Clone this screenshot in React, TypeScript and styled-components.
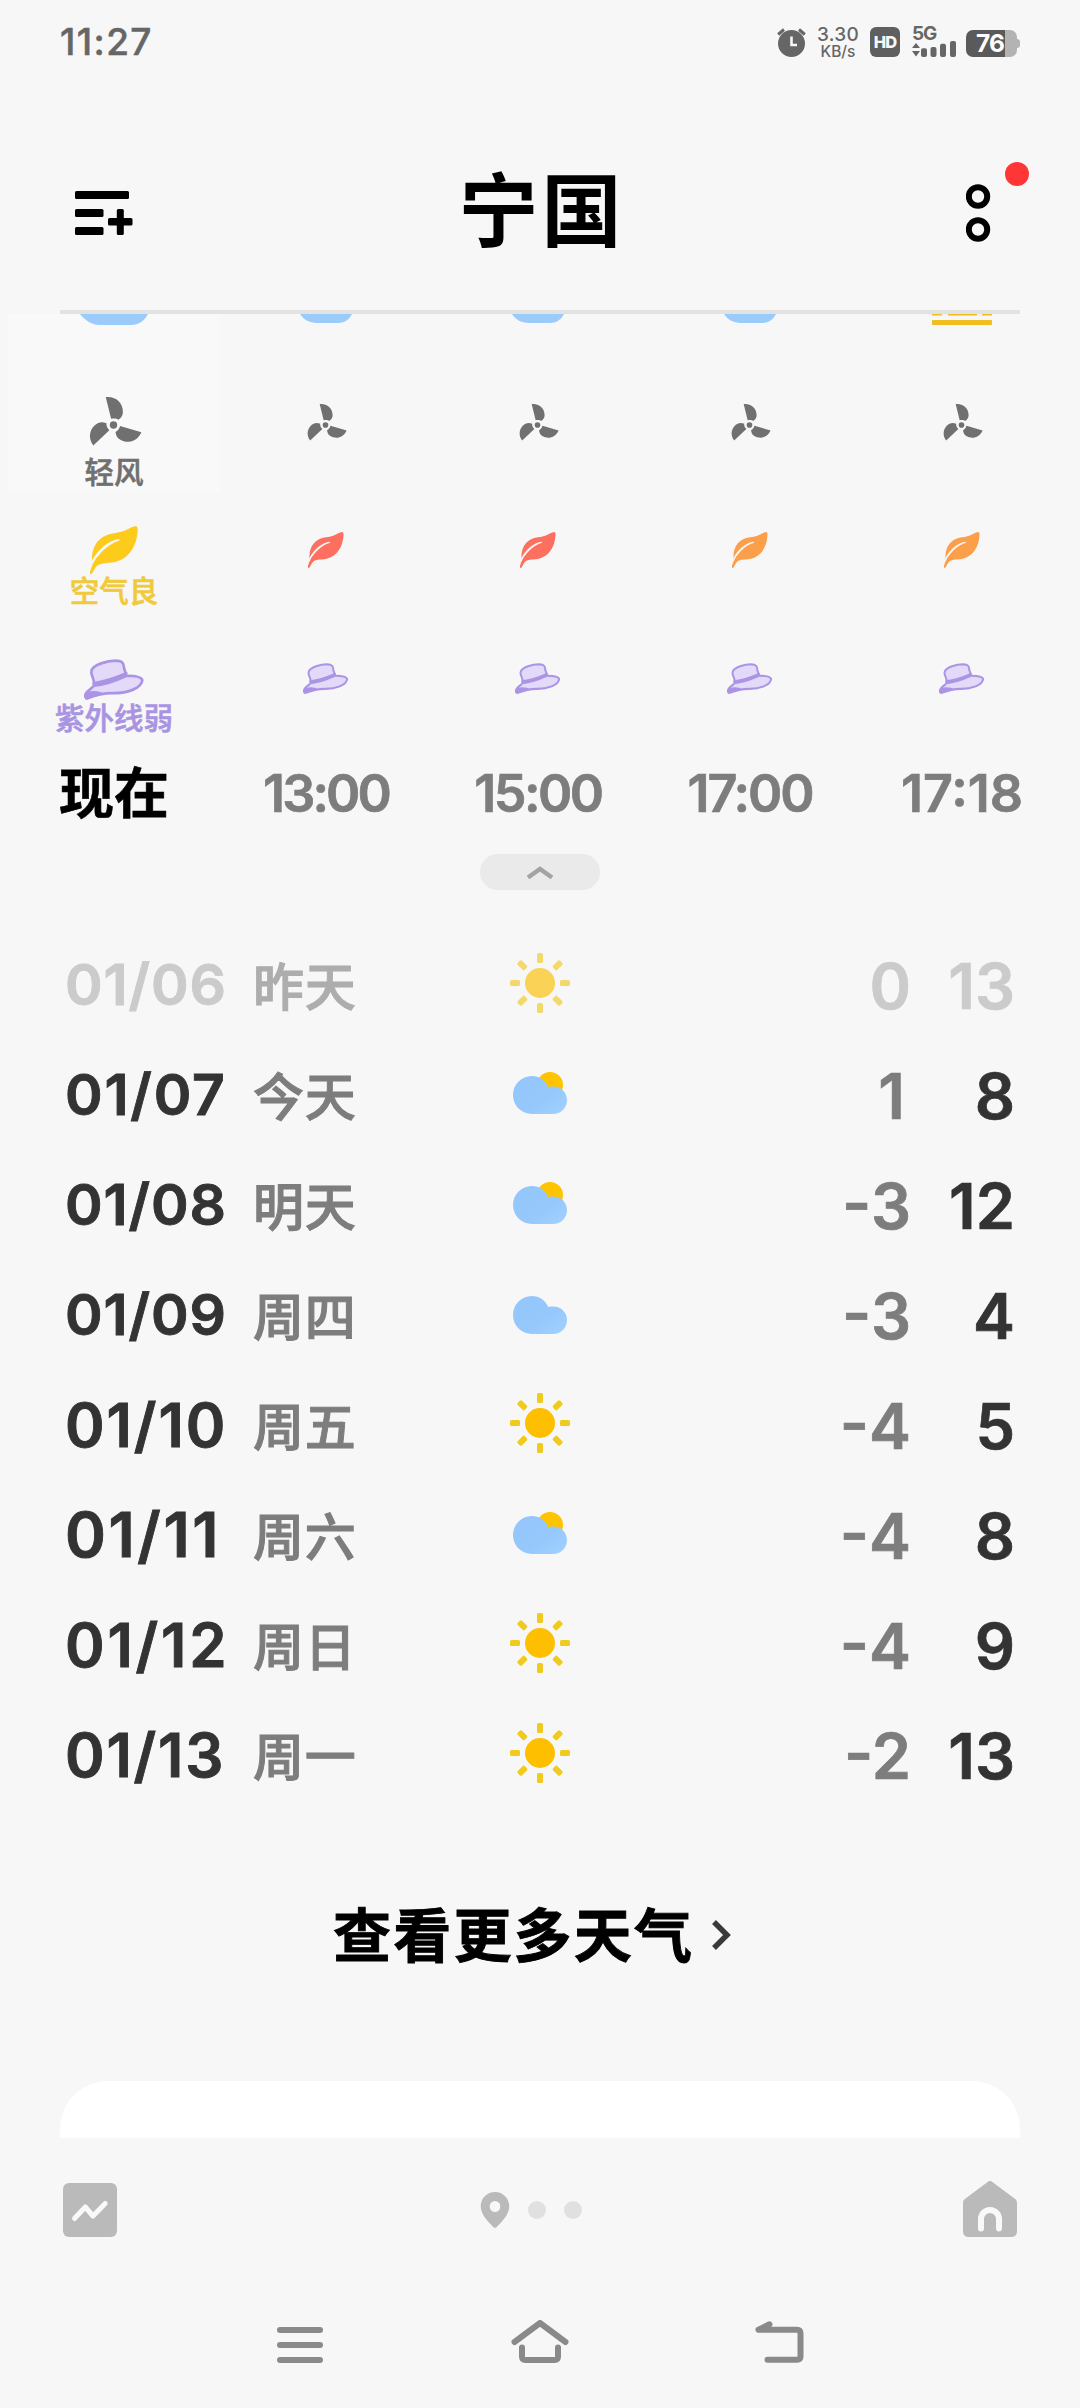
import React from "react";
import styled, { createGlobalStyle } from "styled-components";

const LATIN = `Inter, Roboto, "Noto Sans CJK SC", sans-serif`;
const HAN = `"Noto Sans CJK SC", Inter, sans-serif`;

const GlobalStyle = createGlobalStyle`
  * { box-sizing: border-box; }
  body { margin: 0; background: #f7f7f7; }
  svg { display: block; flex: none; }
`;

const Screen = styled.main`
  width: 1080px;
  height: 2408px;
  display: flex;
  flex-direction: column;
  overflow: hidden;
  background: #f7f7f7;
  font-family: ${LATIN};
`;

/* ---------- status bar ---------- */

const StatusBar = styled.header`
  height: 84px;
  padding: 0 60px;
  display: flex;
  justify-content: space-between;
  align-items: center;
  color: #666;
`;

const Clock = styled.time`
  font-size: 37px;
  line-height: 40px;
  font-weight: 500;
  letter-spacing: 1.4px;
  -webkit-text-stroke: 0.5px currentColor;
`;

const StatusIcons = styled.div`
  display: flex;
  align-items: center;
`;

const NetSpeed = styled.div`
  width: 40px;
  margin: 1px 0 0 12px;
  display: flex;
  flex-direction: column;
  align-items: center;
  white-space: nowrap;
`;

const SpeedValue = styled.span`
  font-size: 19px;
  line-height: 17px;
  font-weight: 500;
  letter-spacing: 0.3px;
`;

const SpeedUnit = styled.span`
  font-size: 15.5px;
  line-height: 17px;
  font-weight: 500;
`;

const HdBadge = styled.div`
  width: 30px;
  height: 30px;
  margin-left: 12px;
  border-radius: 6px;
  display: flex;
  align-items: center;
  justify-content: center;
  background: #5f5f5f;
  color: #f7f7f7;
  font-size: 16.5px;
  font-weight: 800;
  letter-spacing: -0.8px;
`;

const Signal = styled.div`
  width: 44px;
  height: 30px;
  margin-left: 12px;
  display: flex;
  flex-direction: column;
`;

const SignalLabel = styled.span`
  font-size: 19px;
  line-height: 14px;
  height: 14px;
  font-weight: 700;
  letter-spacing: -1.2px;
`;

const Battery = styled.div`
  width: 54px;
  height: 27px;
  margin: 3px 0 0 10px;
  display: flex;
  align-items: center;
`;

const BatteryBody = styled.div`
  width: 51px;
  height: 27px;
  border-radius: 7px;
  display: flex;
  align-items: center;
  padding-left: 10px;
  background: linear-gradient(90deg, #5a5a5a 39px, #b3b3b3 39px);
  color: #fff;
  font-size: 24.5px;
  line-height: 27px;
  font-weight: 700;
  letter-spacing: -0.8px;
`;

const BatteryTip = styled.div`
  width: 3px;
  height: 9px;
  border-radius: 0 3px 3px 0;
  background: #b3b3b3;
`;

/* ---------- title bar ---------- */

const TitleBar = styled.div`
  height: 226px;
  padding: 84px 48px 0 75px;
  display: grid;
  grid-template-columns: 60px 1fr 70px;
  column-gap: 12px;
  align-items: start;
`;

const City = styled.h1`
  margin: -5px 0 0 -14px;
  font-family: ${HAN};
  font-size: 80px;
  line-height: 84px;
  font-weight: 700;
  letter-spacing: 3px;
  text-align: center;
  color: #000;
`;

const AddCityIcon = styled.svg`
  margin-top: 21px;
`;

const MenuButton = styled.div`
  width: 70px;
  height: 90px;
  margin-left: 4px;
  margin-top: -7px;
`;

const Divider = styled.div`
  height: 4px;
  margin: 0 60px;
  flex: none;
  background: #e2e2e2;
`;

/* ---------- hourly ---------- */

const Hourly = styled.section`
  display: grid;
  grid-template-columns: repeat(5, 212px);
  margin-left: 8px;
  height: 509px;
  flex: none;
`;

const Hour = styled.div<{ $current?: boolean }>`
  display: flex;
  flex-direction: column;
  align-items: center;
  background: ${(p) => (p.$current ? "linear-gradient(#f9f9f9 179px, transparent 179px)" : "none")};
`;

const Slot = styled.div<{ $h: number; $gap?: number }>`
  height: ${(p) => p.$h}px;
  margin-top: ${(p) => p.$gap ?? 0}px;
  flex: none;
  display: flex;
  align-items: center;
  justify-content: center;
`;

const SkySlot = styled.div`
  height: 81px;
  flex: none;
`;

const Caption = styled(Slot)<{ $color: string }>`
  padding-bottom: 5px;
  font-family: ${HAN};
  font-size: 29.5px;
  font-weight: 500;
  white-space: nowrap;
  -webkit-text-stroke: 0.6px currentColor;
  color: ${(p) => p.$color};
`;

const HourTime = styled(Slot)<{ $track: number }>`
  font-size: 52px;
  font-weight: 600;
  letter-spacing: ${(p) => p.$track}px;
  -webkit-text-stroke: 0.7px currentColor;
  color: #7d7d7d;
`;

const NowLabel = styled(Slot)`
  padding-bottom: 8px;
  font-family: ${HAN};
  font-size: 55px;
  font-weight: 700;
  -webkit-text-stroke: 0.6px currentColor;
  color: #000;
`;

const CollapsePill = styled.button`
  width: 120px;
  height: 36px;
  margin: 31px auto 0;
  padding: 0;
  border: 0;
  border-radius: 18px;
  flex: none;
  display: flex;
  align-items: center;
  justify-content: center;
  background: #eaeaea;
`;

/* ---------- daily ---------- */

const Daily = styled.section`
  margin-top: 41px;
  flex: none;
`;

const DayRow = styled.div<{ $past?: boolean }>`
  height: 110px;
  padding-left: 65px;
  display: grid;
  grid-template-columns: 188px 231px 112px 315px 104px;
  align-items: center;
  --strong: ${(p) => (p.$past ? "#cbcbcb" : "#333")};
  --soft: ${(p) => (p.$past ? "#cbcbcb" : "#7d7d7d")};
  --name: ${(p) => (p.$past ? "#adadad" : "#7d7d7d")};
`;

const DateText = styled.span<{ $size: number; $track: number }>`
  font-size: ${(p) => p.$size}px;
  line-height: 60px;
  padding-bottom: 2px;
  font-weight: 600;
  letter-spacing: ${(p) => p.$track}px;
  white-space: nowrap;
  -webkit-text-stroke: 0.9px currentColor;
  color: var(--strong);
`;

const DayName = styled.span`
  padding-bottom: 4px;
  font-family: ${HAN};
  font-size: 51px;
  line-height: 60px;
  font-weight: 500;
  letter-spacing: 0.8px;
  -webkit-text-stroke: 1px currentColor;
  color: var(--name);
`;

const SkyCell = styled.span`
  display: flex;
  justify-content: center;
  padding-bottom: 6px;
`;

const Temp = styled.span<{ $strong?: boolean; $inset?: number }>`
  padding-right: ${(p) => p.$inset ?? 0}px;
  font-size: 63px;
  line-height: 70px;
  font-weight: 600;
  text-align: right;
  font-feature-settings: "case";
  -webkit-text-stroke: 0.7px currentColor;
  color: ${(p) => (p.$strong ? "var(--strong)" : "var(--soft)")};
`;

const MoreLink = styled.a`
  height: 80px;
  margin: 84px 0 0 333px;
  flex: none;
  display: flex;
  align-items: center;
  gap: 18px;
  color: #000;
`;

const MoreText = styled.span`
  padding-bottom: 5px;
  font-family: ${HAN};
  font-size: 58px;
  line-height: 75px;
  font-weight: 700;
  letter-spacing: 2.2px;
  -webkit-text-stroke: 0.9px currentColor;
`;

const NextCard = styled.div`
  height: 57px;
  margin: 106px 60px 0;
  flex: none;
  border-radius: 48px 48px 0 0;
  background: #fff;
`;

/* ---------- bottom bars ---------- */

const TabBar = styled.nav`
  height: 144px;
  padding: 0 63px;
  flex: none;
  display: grid;
  grid-template-columns: 54px 1fr 54px;
  align-items: center;
`;

const Pager = styled.div`
  display: flex;
  align-items: center;
  padding-left: 363px;
`;

const PageDot = styled.span`
  width: 18px;
  height: 18px;
  margin-left: 18px;
  border-radius: 50%;
  background: #e0e0e0;
`;

const SystemNav = styled.nav`
  height: 126px;
  padding: 0 180px;
  flex: none;
  display: grid;
  grid-template-columns: repeat(3, 240px);
  justify-items: center;
  align-items: center;
`;

/* ---------- icons ---------- */

const Fan = ({ scale }: { scale: number }) => {
  const blade = "M-7.7-27.8C3-28.8 9.6-21.500 9.400-12.800C9.300-9.600 7.800-7.400 5-5.200C3.400-6.600 .400-7-2.400-6.200Z";
  return (
    <svg width={60} height={60} viewBox="-30.5 -30 60 60" fill="#707070" overflow="visible">
      <g transform={`translate(-1 0) scale(${scale})`}>
        <circle r="3.7" />
        {[0, 120, 240].map((a) => (
          <path key={a} d={blade} transform={`rotate(${a})`} />
        ))}
      </g>
    </svg>
  );
};

const Leaf = ({ color, scale }: { color: string; scale: number }) => (
  <svg width={48 * scale} height={48 * scale} viewBox="270 655 145 140" preserveAspectRatio="none">
    <path
      fill={color}
      d="M276 759C273 712 300 681 342 676C378 672 384 662 405 656C412 654 414 657 414 667C412 715 386 751 346 760C318 765 297 761 286 777C281 785 278 793 274 795C270 796 269 793 270 789C273 779 274 770 276 759Z"
    />
    <path fill="#f7f7f7" d="M359 693C325 696 291 727 275 758L271 786C287 740 322 708 359 697Z" />
    <path fill={color} d="M270 795C274 775 281 758 291 747L300 752C286 765 282 778 275 793Z" />
  </svg>
);

const Hat = ({ scale }: { scale: number }) => (
  <svg width={60 * scale} height={41 * scale} viewBox="251 1041 180 120" preserveAspectRatio="none">
    <g fill="#e2daf8" stroke="#ab94e6" strokeWidth="8" strokeLinejoin="round" strokeLinecap="round">
      <path d="M281 1117C284 1098 271 1090 273 1078C275 1056 325 1046 346 1046C369 1047 370 1055 371 1066C372 1075 377 1079 377 1089Z" />
      <path d="M281 1119C310 1117 350 1103 379 1090C403 1090 424 1094 426 1103C424 1128 378 1141 340 1141C305 1140 280 1149 262 1156C254 1156 253 1149 257 1142C263 1132 271 1130 281 1119Z" />
      <path d="M280 1112C315 1107 350 1095 378 1083" fill="none" />
      <path d="M258 1150C263 1138 281 1137 302 1142C283 1146 272 1152 258 1156Z" fill="#ab94e6" />
    </g>
  </svg>
);

const CloudBase = ({ large }: { large?: boolean }) =>
  large ? (
    <svg width="68" height="11" viewBox="0 0 68 11">
      <path d="M0 0H68C64 7 59 11 51 11H20C11 11 5 6 0 0Z" fill="#9bcbfb" />
    </svg>
  ) : (
    <svg width="52" height="9" viewBox="0 0 52 9">
      <path d="M0 0H52C49 6 44 9 38 9H17C9 9 3 5 0 0Z" fill="#9bcbfb" />
    </svg>
  );

const SunsetBase = () => (
  <svg width="60" height="11" viewBox="0 0 60 11" fill="#f0be1e">
    <path d="M0 0H10V1.5H0ZM16 0H45V1.5H16ZM50 0H60V1.5H50Z" />
    <rect y="6" width="60" height="5" rx="0.8" />
  </svg>
);

const Sun = () => (
  <svg width="60" height="60" viewBox="-30 -30 60 60">
    <circle r="15" fill="#fdbf00" />
    {[0, 45, 90, 135, 180, 225, 270, 315].map((a) => (
      <rect key={a} x="-3" y="-30" width="6" height="10" rx="1.6" fill="#f1ca1e" transform={`rotate(${a})`} />
    ))}
  </svg>
);

const Cloud = ({ sunny }: { sunny?: boolean }) => (
  <svg width="54" height="42" viewBox="0 0 54 42">
    <defs>
      <linearGradient id="sky" x1="0" y1="0" x2="1" y2="1">
        <stop offset="0" stopColor="#93c6fb" />
        <stop offset="0.6" stopColor="#96c8fc" />
        <stop offset="1" stopColor="#a2d2ff" />
      </linearGradient>
    </defs>
    {sunny && <circle cx="37" cy="13" r="13" fill="#ffc400" />}
    <path
      fill="url(#sky)"
      d="M19 4C26.5 4 32.5 8.5 35.2 15C37 14.6 38.5 14.5 40.5 14.5C48 14.5 54 20.5 54 28C54 36 48 42 40 42H19C8.5 42 0 33.5 0 23C0 12.5 8.5 4 19 4Z"
    />
  </svg>
);

/* ---------- data ---------- */

const hours = [
  { time: "13:00", leaf: "#fd7060", track: -2.9 },
  { time: "15:00", leaf: "#fd7060", track: -2.5 },
  { time: "17:00", leaf: "#fc9f4a", track: -2.1 },
  { time: "17:18", leaf: "#fc9f4a", track: 0, sunset: true },
];

type Sky = "sun" | "partly" | "cloud";

type Day = {
  date: string;
  size: number;
  track: number;
  name: string;
  sky: Sky;
  low: string;
  high: string;
  past?: boolean;
};

const days: Day[] = [
  { date: "01/06", size: 57, track: 0.9, name: "昨天", sky: "sun", low: "0", high: "13", past: true },
  { date: "01/07", size: 57, track: 1.8, name: "今天", sky: "partly", low: "1", high: "8" },
  { date: "01/08", size: 57, track: 0.9, name: "明天", sky: "partly", low: "-3", high: "12" },
  { date: "01/09", size: 57, track: 0.9, name: "周四", sky: "cloud", low: "-3", high: "4" },
  { date: "01/10", size: 60, track: 1.9, name: "周五", sky: "sun", low: "-4", high: "5" },
  { date: "01/11", size: 62, track: 2.6, name: "周六", sky: "partly", low: "-4", high: "8" },
  { date: "01/12", size: 60, track: 2.8, name: "周日", sky: "sun", low: "-4", high: "9" },
  { date: "01/13", size: 60, track: 1.8, name: "周一", sky: "sun", low: "-2", high: "13" },
];

const SkyIcon = styled.span<{ $past?: boolean }>`
  opacity: ${(p) => (p.$past ? 0.65 : 1)};
`;

export default function App() {
  return (
    <Screen>
      <GlobalStyle />
      <StatusBar>
        <Clock>11:27</Clock>
        <StatusIcons>
          <svg width="29" height="30" viewBox="0 0 29 30" fill="none" stroke="#666" strokeWidth="3">
            <circle cx="14.5" cy="16.5" r="13.5" fill="#666" stroke="none" />
            <path d="M1.2 7.5L7 2.5M27.8 7.5L22 2.5" />
            <path d="M14.5 9.5V18H20" stroke="#f7f7f7" strokeWidth="2.6" />
          </svg>
          <NetSpeed>
            <SpeedValue>3.30</SpeedValue>
            <SpeedUnit>KB/s</SpeedUnit>
          </NetSpeed>
          <HdBadge>HD</HdBadge>
          <Signal>
            <SignalLabel>5G</SignalLabel>
            <svg width="44" height="16" viewBox="0 0 44 16" fill="#666">
              <path d="M0 7L4 2L8 7ZM0 10L4 15.5L8 10Z" />
              <rect x="9" y="7.3" width="6" height="8.7" rx="2" />
              <rect x="18.5" y="6" width="6" height="10" rx="2" />
              <rect x="28" y="2.7" width="6" height="13.3" rx="2" />
              <rect x="38" y="0" width="6" height="16" rx="2" />
            </svg>
          </Signal>
          <Battery>
            <BatteryBody>76</BatteryBody>
            <BatteryTip />
          </Battery>
        </StatusIcons>
      </StatusBar>

      <TitleBar>
        <AddCityIcon width="58" height="48" viewBox="0 0 58 48">
          <rect x="0" y="2" width="54" height="8" rx="1.5" />
          <rect x="0" y="20" width="28.5" height="8" rx="1.5" />
          <rect x="0" y="38" width="28.5" height="8" rx="1.5" />
          <rect x="33" y="29" width="24.5" height="7.5" rx="1.5" />
          <rect x="41.8" y="20" width="7" height="26" rx="1.5" />
        </AddCityIcon>
        <City>宁国</City>
        <MenuButton>
          <svg width="70" height="90" viewBox="0 0 70 90" fill="none" stroke="#000" strokeWidth="6">
            <circle cx="12" cy="35.5" r="9.2" />
            <circle cx="12" cy="68.5" r="9.2" />
            <circle cx="51" cy="13" r="12" fill="#ff3636" stroke="none" />
          </svg>
        </MenuButton>
      </TitleBar>
      <Divider />

      <Hourly>
        <Hour $current>
          <SkySlot>
            <CloudBase large />
          </SkySlot>
          <Slot $h={60}>
            <Fan scale={1} />
          </Slot>
          <Caption $h={34} $color="#707070">轻风</Caption>
          <Slot $h={50} $gap={36}>
            <Leaf color="#fccb1c" scale={1} />
          </Slot>
          <Caption $h={33} $color="#f0ca3c">空气良</Caption>
          <Slot $h={44} $gap={49}>
            <Hat scale={1} />
          </Slot>
          <Caption $h={34} $color="#a994e2">紫外线弱</Caption>
          <NowLabel $h={60} $gap={28}>现在</NowLabel>
        </Hour>
        {hours.map((h) => (
          <Hour key={h.time}>
            <SkySlot>{h.sunset ? <SunsetBase /> : <CloudBase />}</SkySlot>
            <Slot $h={60}>
              <Fan scale={0.757} />
            </Slot>
            <Slot $h={50} $gap={70}>
              <Leaf color={h.leaf} scale={0.745} />
            </Slot>
            <Slot $h={44} $gap={82}>
              <Hat scale={0.757} />
            </Slot>
            <HourTime $h={60} $gap={62} $track={h.track}>{h.time}</HourTime>
          </Hour>
        ))}
      </Hourly>
      <CollapsePill aria-label="收起">
        <svg width="28" height="16" viewBox="0 0 28 16" fill="none" stroke="#a3a3a3" strokeWidth="4.5">
          <path d="M2 13.5L14 5L26 13.5" />
        </svg>
      </CollapsePill>

      <Daily>
        {days.map((d) => (
          <DayRow key={d.date} $past={d.past}>
            <DateText $size={d.size} $track={d.track}>{d.date}</DateText>
            <DayName>{d.name}</DayName>
            <SkyCell>
              <SkyIcon $past={d.past}>{d.sky === "sun" ? <Sun /> : <Cloud sunny={d.sky === "partly"} />}</SkyIcon>
            </SkyCell>
            <Temp $inset={d.low === "1" ? 6 : 0}>{d.low}</Temp>
            <Temp $strong>{d.high}</Temp>
          </DayRow>
        ))}
      </Daily>

      <MoreLink>
        <MoreText>查看更多天气</MoreText>
        <svg width="20" height="30" viewBox="0 0 20 30" fill="none" stroke="#3a3a3a" strokeWidth="5.5">
          <path d="M2 2L15 15L2 28" />
        </svg>
      </MoreLink>
      <NextCard />

      <TabBar>
        <svg width="54" height="54" viewBox="0 0 54 54">
          <rect width="54" height="54" rx="6" fill="#bababa" />
          <path
            d="M11.5 35.5L22.3 24L30 33L42.2 20.5"
            fill="none"
            stroke="#f9f9f9"
            strokeWidth="5"
            strokeLinecap="round"
            strokeLinejoin="round"
          />
        </svg>
        <Pager>
          <svg width="30" height="36" viewBox="0 0 30 36" fill="#bababa">
            <path
              fillRule="evenodd"
              d="M15 0C23 0 29.3 6.3 29.3 14.3C29.3 22 22 30 16.5 35.2Q15 36.5 13.5 35.2C8 30 .7 22 .7 14.3C.7 6.3 7 0 15 0ZM15 9A5.3 5.5 0 1 0 15 20A5.3 5.5 0 1 0 15 9Z"
            />
          </svg>
          <PageDot />
          <PageDot />
        </Pager>
        <svg width="54" height="58" viewBox="0 0 54 58">
          <path
            fill="#bababa"
            d="M25 .7Q27-.8 29 .7L52.5 18.3Q54 19.5 54 22V50Q54 56 48 56H6Q0 56 0 50V22Q0 19.5 1.5 18.3Z"
          />
          <path d="M18 47.5V38A9 9 0 0 1 36 38V47.5" fill="none" stroke="#f9f9f9" strokeWidth="6" strokeLinecap="round" />
        </svg>
      </TabBar>

      <SystemNav>
        <svg width="46" height="36" viewBox="0 0 46 36" fill="#8a8a8a">
          <rect width="46" height="6" rx="3" />
          <rect y="15" width="46" height="6" rx="3" />
          <rect y="30" width="46" height="6" rx="3" />
        </svg>
        <svg
          width="58"
          height="50"
          viewBox="0 6.5 58 50"
          fill="none"
          stroke="#8a8a8a"
          strokeWidth="6"
          strokeLinecap="round"
          strokeLinejoin="round"
        >
          <path d="M3.5 28.5L29 9.5L54.5 28.5" />
          <path d="M11 34V43Q11 46.5 14.5 46.5H43.5Q47 46.5 47 43V34" />
        </svg>
        <svg
          width="50"
          height="50"
          viewBox="1.5 6.7 50 50"
          fill="none"
          stroke="#8a8a8a"
          strokeWidth="6"
          strokeLinecap="round"
          strokeLinejoin="round"
        >
          <path d="M16 11L5 16.5H43.5Q47 16.5 47 20V43Q47 46.5 43.5 46.5H14" />
        </svg>
      </SystemNav>
    </Screen>
  );
}
